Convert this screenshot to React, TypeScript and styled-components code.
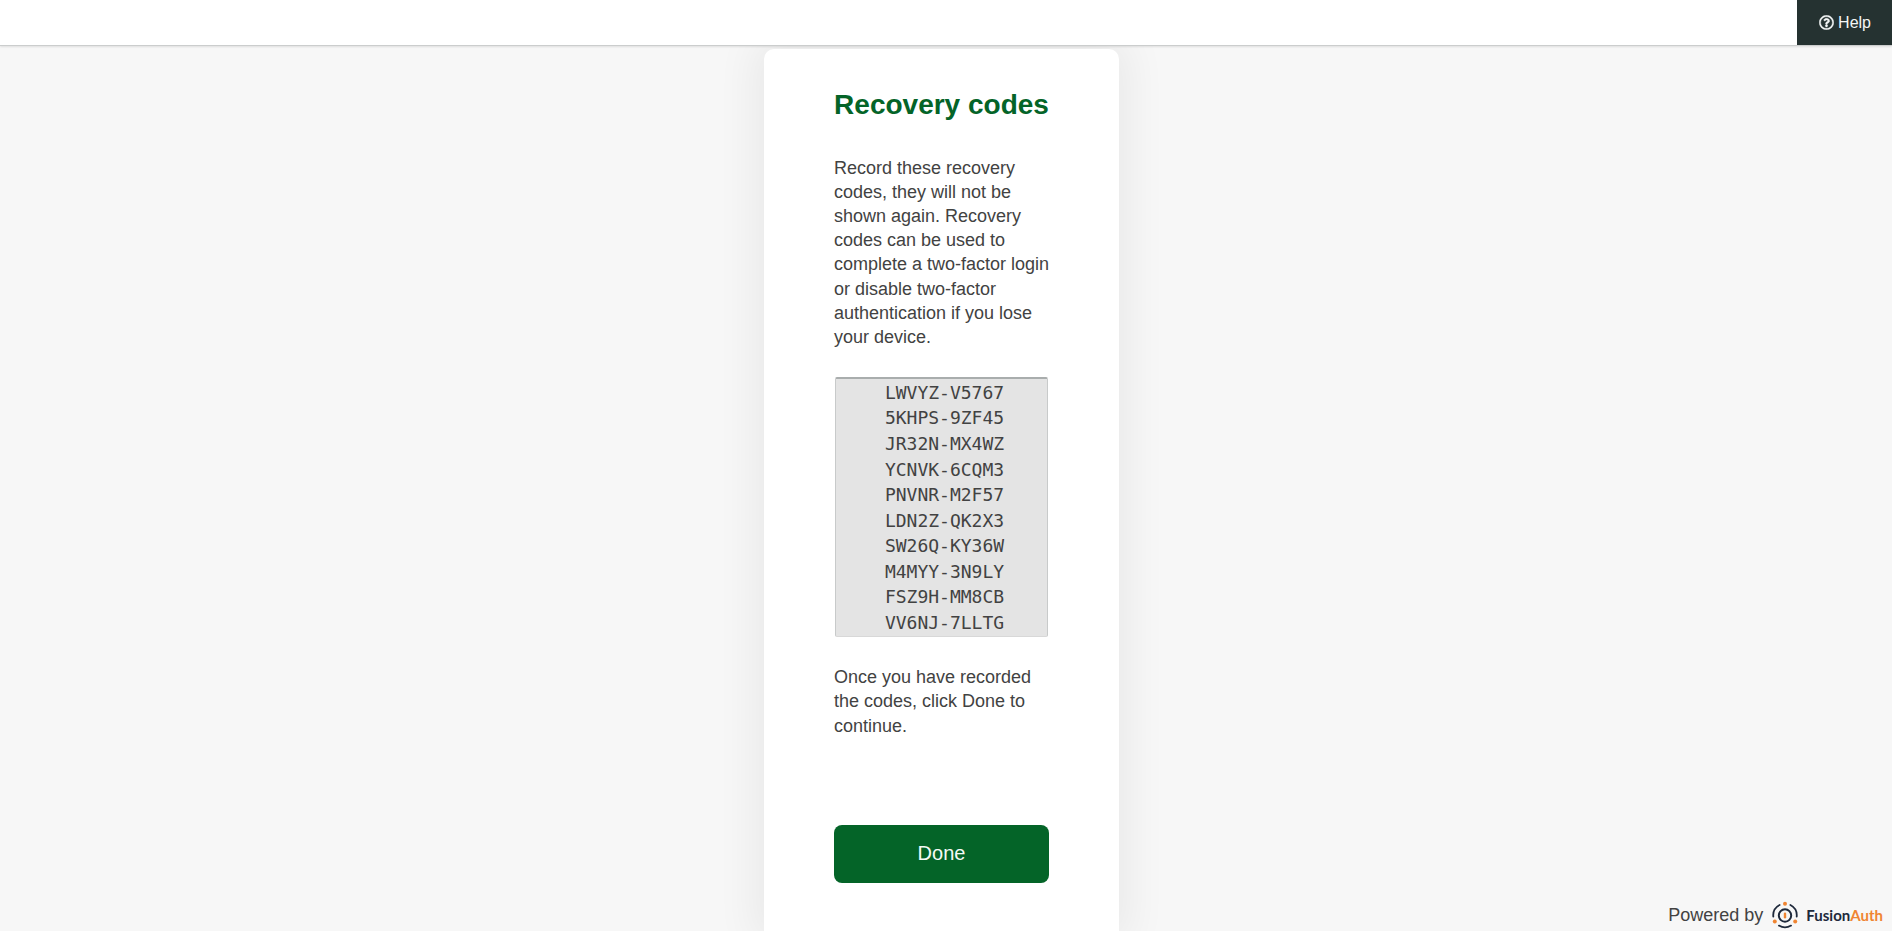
import React from "react";
import styled, { createGlobalStyle } from "styled-components";
import { FaRegQuestionCircle } from "react-icons/fa";

const GlobalStyle = createGlobalStyle`
  *, *::before, *::after { box-sizing: border-box; }
  body {
    margin: 0;
    background: #f7f7f7;
    color: #424242;
    font-family: "Liberation Sans", Arial, sans-serif;
    font-size: 18px;
    line-height: 1.34;
  }
`;

const Page = styled.div`
  min-height: 100vh;
  display: flex;
  flex-direction: column;
  position: relative;
`;

const Header = styled.header`
  display: flex;
  justify-content: flex-end;
  height: 46px;
  background: #fff;
  border-bottom: 1px solid #cbcdcd;
  box-shadow: 0 1px 2px rgba(0, 0, 0, 0.1);
  z-index: 1;
`;

const HelpLink = styled.a`
  display: flex;
  align-items: center;
  gap: 4px;
  padding: 0 21px 0 22px;
  background: #253231;
  color: #f4f6f6;
  font-size: 16px;
  text-decoration: none;

  svg {
    width: 15px;
    height: 15px;
    stroke: currentColor;
    stroke-width: 12px;
  }
`;

const Main = styled.main`
  flex: 1;
  display: flex;
  justify-content: center;
  padding: 3px 9px 0 0;
  overflow: hidden;
`;

const Card = styled.section`
  width: 355px;
  padding: 40px 66px 48px 70px;
  background: #fff;
  border-radius: 10px 10px 0 0;
  box-shadow: 0 0 42px 10px rgba(0, 0, 0, 0.06);
`;

const Title = styled.h1`
  margin: 0 4px 35px 0;
  color: #046428;
  font-size: 28px;
  line-height: 32px;
  text-align: center;
  white-space: nowrap;
`;

const Text = styled.p`
  margin: 0;
`;

const CodeList = styled.ul`
  margin: 28px 5px 28px 1px;
  padding: 1px 0 1px 6px;
  list-style: none;
  background: #e4e4e4;
  border: 1px solid #c8caca;
  border-top: 2px solid #a9adad;
  border-bottom-color: #d8d8d8;
  border-radius: 2px;
  font-family: "DejaVu Sans Mono", monospace;
  line-height: 1.42;
  text-align: center;
`;

const DoneButton = styled.button`
  display: block;
  width: 215px;
  height: 58px;
  margin-top: 87px;
  border: 0;
  border-radius: 8px;
  background: #046428;
  color: #f4fbf6;
  font-family: inherit;
  font-size: 20px;
  cursor: pointer;
`;

const Footer = styled.footer`
  position: absolute;
  right: 9px;
  bottom: 2px;
  display: flex;
  align-items: center;
  gap: 9px;
`;

const BrandLink = styled.a`
  display: flex;
  align-items: center;
  gap: 8px;
  color: #1e293b;
  font-family: Lato, sans-serif;
  font-size: 15px;
  font-weight: 700;
  text-decoration: none;
`;

const Accent = styled.span`
  color: #f08532;
`;

const codes = [
  "LWVYZ-V5767",
  "5KHPS-9ZF45",
  "JR32N-MX4WZ",
  "YCNVK-6CQM3",
  "PNVNR-M2F57",
  "LDN2Z-QK2X3",
  "SW26Q-KY36W",
  "M4MYY-3N9LY",
  "FSZ9H-MM8CB",
  "VV6NJ-7LLTG",
];

function BrandMark() {
  return (
    <svg width="26" height="28" viewBox="0 0 26 28" fill="none" aria-hidden="true">
      <g stroke="#1e293b" strokeWidth="1.8" strokeLinecap="round">
        <circle cx="13" cy="14.5" r="6.2" strokeWidth="2" />
        <path d="M7.6 4A11.8 11.8 0 0 0 1.3 15.6" />
        <path d="M18.4 4A11.8 11.8 0 0 1 24.7 15.6" />
        <path d="M6.9 24.6A11.8 11.8 0 0 0 19.1 24.6" />
      </g>
      <g fill="#f08532">
        <circle cx="13" cy="2.7" r="2" />
        <circle cx="2.8" cy="20.6" r="2" />
        <circle cx="23.2" cy="20.6" r="2" />
        <rect x="11.8" y="11.6" width="2.4" height="5.8" rx="1.2" />
      </g>
    </svg>
  );
}

export default function App() {
  return (
    <Page>
      <GlobalStyle />
      <Header>
        <HelpLink href="#help">
          <FaRegQuestionCircle aria-hidden="true" />
          Help
        </HelpLink>
      </Header>
      <Main>
        <Card>
          <Title>Recovery codes</Title>
          <Text>
            Record these recovery codes, they will not be shown again. Recovery
            codes can be used to complete a two-factor login or disable
            two-factor authentication if you lose your device.
          </Text>
          <CodeList>
            {codes.map((code) => (
              <li key={code}>{code}</li>
            ))}
          </CodeList>
          <Text>
            Once you have recorded the codes, click Done to continue.
          </Text>
          <DoneButton type="button">Done</DoneButton>
        </Card>
      </Main>
      <Footer>
        <span>Powered by</span>
        <BrandLink href="#fusionauth">
          <BrandMark />
          <span>
            Fusion<Accent>Auth</Accent>
          </span>
        </BrandLink>
      </Footer>
    </Page>
  );
}
